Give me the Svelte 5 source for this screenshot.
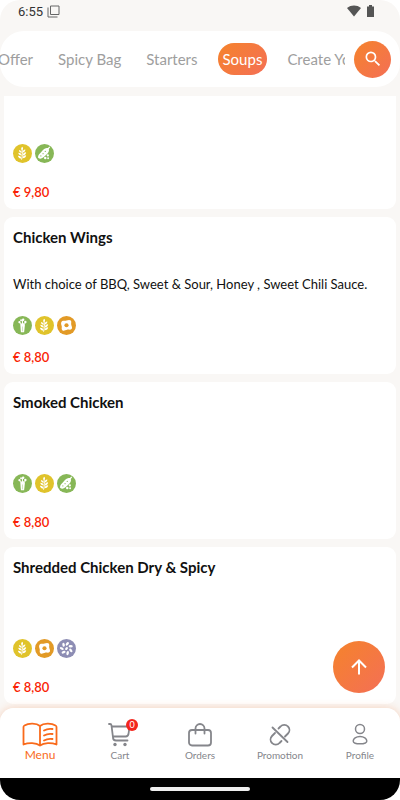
<script lang="ts">
	type Allergen = 'wheat' | 'peas' | 'celery' | 'egg' | 'sesame';

	interface Dish {
		name: string;
		description?: string;
		allergens: Allergen[];
		price: string;
	}

	const categories = ['Offer', 'Spicy Bag', 'Starters', 'Soups', 'Create Your'];

	const dishes: Dish[] = [
		{ name: '', allergens: ['wheat', 'peas'], price: '9,80' },
		{
			name: 'Chicken Wings',
			description: 'With choice of BBQ, Sweet & Sour, Honey , Sweet Chili Sauce.',
			allergens: ['celery', 'wheat', 'egg'],
			price: '8,80'
		},
		{ name: 'Smoked Chicken', allergens: ['celery', 'wheat', 'peas'], price: '8,80' },
		{ name: 'Shredded Chicken Dry & Spicy', allergens: ['wheat', 'egg', 'sesame'], price: '8,80' }
	];

	const pages = ['Menu', 'Cart', 'Orders', 'Promotion', 'Profile'];

	let category = $state('Soups');
	let page = $state('Menu');
	let cartCount = $state(0);
	let list: HTMLElement;
</script>

{#snippet allergenIcon(kind: Allergen)}
	<svg class="allergen {kind}" viewBox="0 0 20 20" role="img" aria-label={kind}>
		<circle class="disc" cx="10" cy="10" r="10" />
		{#if kind === 'wheat'}
			<path class="line" d="M9 16.500c1-3 1-8 .5-11" />
			<path
				d="M9.500 6.500C8 5.500 8.500 4 9.800 3c1.200 1.300 1 2.700-.3 3.500zM9.300 9.200C7 9 6.200 7.700 6.300 6.200c2 .4 3 1.300 3 3zM10 9c0-2 1-3 3-3.200 0 1.800-1 3-3 3.200zM9.300 12.200C7 12 5.700 10.900 5.500 9.200c2.300.1 3.600 1.100 3.800 3zM10.200 12c.1-2 1.300-3.200 3.600-3.400 0 1.900-1.300 3.300-3.600 3.400zM9 15.200c-2 0-3.400-1-3.800-2.700 2.200-.2 3.500.8 3.800 2.700zM10 15c.2-2 1.500-3.200 3.900-3.200-.2 2-1.500 3.200-3.900 3.200z"
			/>
		{:else if kind === 'peas'}
			<path d="M3.200 14.500c-.4-2.700 1.800-4 3.400-6C8 6.500 10.300 3.500 13.500 4.300L15.300 2.700l.7.8-1.500 1.700c1 3-1.600 5-3.500 6.900-2 2-4.700 4.800-7.800 2.400z" />
			<g class="cut">
				<circle cx="6.200" cy="12.500" r=".6" />
				<circle cx="8.500" cy="10.200" r=".6" />
				<circle cx="10.800" cy="7.800" r=".6" />
			</g>
			<circle cx="13.500" cy="12" r="1.200" />
			<circle cx="10.800" cy="14.700" r="1.300" />
			<circle cx="13.800" cy="15" r="1" />
		{:else if kind === 'celery'}
			<path d="M8.300 17l-.5-7 1-2.500h2.700l1 2.500-.8 7z" />
			<path class="line" d="M8.800 10L7 6.500M10 9V4M11 10l2-3" />
			<circle cx="6.800" cy="6.500" r="1.200" />
			<circle cx="8.500" cy="4.500" r="1" />
			<circle cx="10.700" cy="3.900" r="1.300" />
			<circle cx="13" cy="6.300" r="1.300" />
			<path class="cut" d="M9.800 11h.4v5h-.4z" />
		{:else if kind === 'egg'}
			<path d="M4.500 6.500C5.500 4 8 5.500 10 4.800c1.500-.6 3.300-1.200 4.500 0 1.100 1.200.1 2.800.5 4.300.4 1.700 1.500 3.300.3 4.700-1.300 1.400-3 .2-4.700.6-1.800.5-3.500 1.700-5 .5-1.300-1.200-.3-2.700-.6-4.200-.3-1.500-1.100-2.700-.5-4.200z" />
			<circle class="cut" cx="10" cy="9.700" r="2.200" />
		{:else}
			{#each [10, 62, 114, 166, 218, 270, 322] as angle (angle)}
				<ellipse cx="10" cy="5" rx="1.300" ry="2.200" transform="rotate({angle} 10 10) rotate(28 10 5)" />
			{/each}
			<ellipse cx="10" cy="10" rx="1.200" ry="1.800" transform="rotate(40 10 10)" />
		{/if}
	</svg>
{/snippet}

<div class="app">
	<header class="status">
		<span>6:55</span>
		<svg class="copy" width="13" height="13" viewBox="0 0 13 13">
			<path d="M3.500 1h8.500v8.500H3.500zM1 2.500V12h9.500" />
		</svg>
		<svg class="signal" width="31" height="14" viewBox="0 0 31 14">
			<path d="M2 4C6 .700 12 .700 16 4L9 12.500z" />
			<path d="M22 2.500h2V1h3v1.500h2V13h-7z" />
		</svg>
	</header>

	<div class="top-bar">
		<div class="categories">
			{#each categories as name (name)}
				<button class:active={category === name} onclick={() => (category = name)}>{name}</button>
			{/each}
		</div>
		<button class="search" aria-label="Search">
			<svg width="20" height="20" viewBox="0 0 24 24">
				<path
					d="M15.500 14h-.79l-.28-.27A6.471 6.471 0 0 0 16 9.500 6.500 6.500 0 1 0 9.500 16c1.610 0 3.090-.59 4.230-1.570l.27.28v.79l5 4.990L20.490 19zm-6 0C7.010 14 5 11.990 5 9.500S7.010 5 9.500 5 14 7.010 14 9.500 11.990 14 9.500 14z"
				/>
			</svg>
		</button>
	</div>

	<main bind:this={list}>
		{#each dishes as dish, i (i)}
			<article>
				<h2>{dish.name}</h2>
				<p class="description" class:empty={!dish.description}>{dish.description ?? ''}</p>
				<div class="allergens">
					{#each dish.allergens as kind (kind)}
						{@render allergenIcon(kind)}
					{/each}
				</div>
				<p class="price">€ {dish.price}</p>
			</article>
		{/each}
	</main>

	<footer>
		<button class="to-top" aria-label="Back to top" onclick={() => list.scrollTo({ top: 0 })}>
			<svg width="24" height="24" viewBox="0 0 24 24">
				<path d="M12 19.500V6M5 12.500L12 5.500l7 7" />
			</svg>
		</button>
		<nav>
			{#each pages as name (name)}
				<button class:active={page === name} onclick={() => (page = name)}>
					<span class="icon">
						{#if name === 'Menu'}
							<svg width="36" height="26" viewBox="0 0 36 26">
								<path d="M18 4C14.500.800 6.500.800 2.500 3.500A1.500 1.500 0 0 0 1.500 5v17.500c5-2 12.500-2 16.500 1 4-3 11.500-3 16.500-1V5a1.500 1.500 0 0 0-1-1.500C29.500.800 21.500.800 18 4zv19.500" />
								<path d="M22 8.500c2.500-1.500 5.500-2 8.500-1.500M22 13.500c2.500-1.500 5.500-2 8.500-1.500M22 18.500c2.500-1.500 5.500-2 8.500-1.500" />
							</svg>
						{:else if name === 'Cart'}
							<svg width="26" height="26" viewBox="0 0 26 26">
								<path d="M2 2h1a1.500 1.500 0 0 1 1.500 1.300L6 15.500a3 3 0 0 0 3 3h11.500M4.800 4.500H22.500l-1 7.500a3 3 0 0 1-2.800 2.500H6" />
								<circle class="wheel" cx="8" cy="22.500" r="1.700" />
								<circle class="wheel" cx="18" cy="22.500" r="1.700" />
							</svg>
							<span class="badge">{cartCount}</span>
						{:else if name === 'Orders'}
							<svg width="26" height="26" viewBox="0 0 26 26">
								<path d="M5 8h16a3 3 0 0 1 3 3v9.500a3 3 0 0 1-3 3H5a3 3 0 0 1-3-3V11a3 3 0 0 1 3-3zM8.500 11.500V6.500a4.500 4.500 0 0 1 9 0v5" />
							</svg>
						{:else if name === 'Promotion'}
							<svg width="26" height="26" viewBox="0 0 26 26">
								<path d="M5.500 5.500l15 14.500M11.500 6.500l2-2a5 5 0 0 1 7.500 0 5 5 0 0 1 0 7l-3 3M14.500 19l-2 2a5 5 0 0 1-7.500 0 5 5 0 0 1 0-7l3-3" />
							</svg>
						{:else}
							<svg class="thin" width="26" height="26" viewBox="0 0 26 26">
								<circle cx="13" cy="7" r="4.500" />
								<path d="M13 14.500c4 0 6.800 2.200 6.800 4.400S17 21.800 13 21.800s-6.800-.7-6.800-2.900S9 14.500 13 14.500z" />
							</svg>
						{/if}
					</span>
					{name}
				</button>
			{/each}
		</nav>
		<div class="system-bar"><span></span></div>
	</footer>
</div>

<style>
	:global(body) {
		margin: 0;
		background: #fff;
	}
	.app {
		display: flex;
		flex-direction: column;
		height: 100vh;
		overflow: hidden;
		border-radius: 20px;
		background: #f9f7f5;
		color: #111;
		font-family: Lato, sans-serif;
	}
	button {
		border: 0;
		padding: 0;
		background: none;
		font-family: inherit;
		cursor: pointer;
	}
	svg {
		display: block;
	}
	.status {
		display: flex;
		align-items: center;
		flex: none;
		gap: 4px;
		height: 22px;
		margin-bottom: 9px;
		padding: 0 24px 0 18px;
		font-family: Roboto, sans-serif;
		font-size: 13px;
		color: #333;
	}
	.copy {
		fill: none;
		stroke: #666;
	}
	.signal {
		margin-left: auto;
		fill: #555;
	}
	.top-bar {
		display: flex;
		align-items: center;
		flex: none;
		gap: 9px;
		height: 56px;
		margin-bottom: 9px;
		padding-right: 9px;
		border-radius: 24px;
		background: #fff;
	}
	.categories {
		display: flex;
		flex: 1;
		gap: 15px;
		min-width: 0;
		overflow: hidden;
	}
	.categories button {
		flex: none;
		height: 32px;
		padding: 0 5px 1px;
		border-radius: 16px;
		color: #9e9e9e;
		font-size: 15px;
		white-space: nowrap;
	}
	.categories button:first-child {
		margin-left: -7px;
	}
	.categories button.active {
		background: linear-gradient(135deg, #f5832b, #f46f56);
		color: #fff;
	}
	.search,
	.to-top {
		display: grid;
		place-items: center;
		border-radius: 50%;
		background: linear-gradient(135deg, #f5832b, #f46f56);
	}
	.search {
		flex: none;
		width: 37px;
		height: 37px;
		fill: #fff;
	}
	main {
		display: flex;
		flex: 1;
		flex-direction: column;
		justify-content: flex-end;
		gap: 8px;
		min-height: 0;
		margin-bottom: 4px;
		padding: 0 4px;
		overflow: hidden;
	}
	article {
		display: flex;
		flex: none;
		flex-direction: column;
		box-sizing: border-box;
		height: 157px;
		padding: 10px 9px 7px;
		border-radius: 9px;
		background: #fff;
	}
	h2 {
		height: 20px;
		margin: 0 0 27px;
		font-size: 15px;
		line-height: 20px;
	}
	.description {
		height: 20px;
		margin: 0 0 22px;
		font-size: 13px;
		line-height: 20px;
	}
	.description.empty {
		height: 13px;
	}
	.allergens {
		display: flex;
		gap: 3px;
	}
	.allergen {
		width: 19px;
		height: 19px;
		fill: #fff;
	}
	.wheat {
		color: #e0c32b;
	}
	.peas,
	.celery {
		color: #87b757;
	}
	.egg {
		color: #e29a26;
	}
	.sesame {
		color: #8d8db4;
	}
	.disc,
	.cut {
		fill: currentColor;
	}
	.line {
		fill: none;
		stroke: #fff;
	}
	.price {
		margin: auto 0 0;
		color: #f91f06;
		font-size: 13px;
		font-weight: 600;
		line-height: 20px;
	}
	footer {
		position: relative;
		flex: none;
		border-radius: 14px 14px 0 0;
		box-shadow: 0 0 8px rgba(245, 120, 50, 0.3);
	}
	.to-top {
		position: absolute;
		right: 15px;
		bottom: calc(100% + 15px);
		width: 52px;
		height: 52px;
	}
	.to-top svg {
		fill: none;
		stroke: #fff;
		stroke-width: 2;
	}
	nav {
		display: flex;
		height: 70px;
		border-radius: 14px 14px 0 0;
		background: #fff;
	}
	nav button {
		display: flex;
		flex: 1;
		flex-direction: column;
		align-items: center;
		gap: 1px;
		padding-top: 14px;
		color: #85868b;
		font-size: 10px;
		line-height: 12px;
	}
	nav .active {
		gap: 0;
		color: #f96a1b;
		font-size: 12px;
		line-height: 14px;
	}
	.icon {
		position: relative;
	}
	.icon svg {
		fill: none;
		stroke: currentColor;
		stroke-width: 1.8;
		stroke-linecap: round;
		stroke-linejoin: round;
	}
	.icon .thin {
		stroke-width: 1.5;
	}
	.icon .wheel {
		fill: currentColor;
		stroke: none;
	}
	.badge {
		position: absolute;
		top: -3px;
		right: -5px;
		width: 12px;
		height: 12px;
		border-radius: 50%;
		background: #f3261d;
		color: #fff;
		font-size: 9px;
		text-align: center;
	}
	.system-bar {
		display: grid;
		place-items: center;
		height: 22px;
		background: #000;
	}
	.system-bar span {
		width: 100px;
		height: 4px;
		border-radius: 2px;
		background: #eee;
	}
</style>
